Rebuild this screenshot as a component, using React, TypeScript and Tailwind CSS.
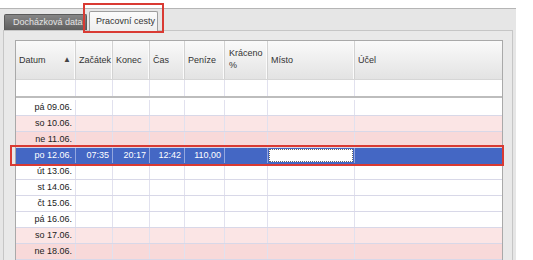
import React from 'react'

type Row = {
  date: string
  kind: 'work' | 'sat' | 'sun'
  selected?: boolean
  vals?: string[]
}

const rows: Row[] = [
  { date: 'pá 09.06.', kind: 'work' },
  { date: 'so 10.06.', kind: 'sat' },
  { date: 'ne 11.06.', kind: 'sun' },
  { date: 'po 12.06.', kind: 'work', selected: true, vals: ['07:35', '20:17', '12:42', '110,00'] },
  { date: 'út 13.06.', kind: 'work' },
  { date: 'st 14.06.', kind: 'work' },
  { date: 'čt 15.06.', kind: 'work' },
  { date: 'pá 16.06.', kind: 'work' },
  { date: 'so 17.06.', kind: 'sat' },
  { date: 'ne 18.06.', kind: 'sun' },
]

const cols = 'grid grid-cols-[60px_37px_37px_35px_40px_43px_87px_1fr]'

function HeaderCell({ children, last }: { children?: React.ReactNode; last?: boolean }) {
  return (
    <div
      className={`h-full px-[3px] pt-[13px] text-[#333] leading-[12px] whitespace-nowrap ${
        last ? '' : 'border-r border-[#d2d2d2] shadow-[inset_-1px_0_0_#fbfbfb]'
      }`}
    >
      {children}
    </div>
  )
}

function DataRow({ row }: { row: Row }) {
  const bg = row.selected
    ? 'bg-[#4467c4] text-white'
    : row.kind === 'sat'
    ? 'bg-[#fbe5e5] text-[#222]'
    : row.kind === 'sun'
    ? 'bg-[#f8d9d9] text-[#222]'
    : 'bg-white text-[#222]'
  const line = row.selected ? 'border-[#93a6de]' : 'border-[#e1e1ee]'
  const cell = `h-full border-r ${line} pr-[3px] text-right leading-[15px] whitespace-nowrap`
  const v = row.vals ?? ['', '', '', '']
  return (
    <div className={`${cols} h-[16px] border-b ${row.selected ? 'border-[#4467c4]' : 'border-[#d8d8e8]'} ${bg}`}>
      <div className={cell}>{row.date}</div>
      <div className={cell}>{v[0]}</div>
      <div className={cell}>{v[1]}</div>
      <div className={cell}>{v[2]}</div>
      <div className={cell}>{v[3]}</div>
      <div className={cell}></div>
      <div className={`h-full border-r ${line} ${row.selected ? 'p-px' : ''}`}>
        {row.selected && <div className="h-full bg-white border border-dotted border-[#666]" />}
      </div>
      <div className="h-full"></div>
    </div>
  )
}

export default function App() {
  return (
    <div className="relative w-[533px] h-[260px] overflow-hidden bg-white font-['Liberation_Sans',Arial,sans-serif] text-[9px]">
      <div className="mt-[8px] w-[516px] h-[252px] bg-[#e6e6e6] border-t border-[#b5b5b5] flex flex-col">
        {/* Tabs */}
        <div className="h-[21px] flex items-end pl-[4px] gap-[2px]">
          <div className="h-[16px] w-[83px] rounded-t-[2px] border border-b-0 border-[#5a5a5a] bg-gradient-to-b from-[#858585] to-[#5f5f5f] text-[#e4e4e4] text-[9px] leading-[15px] pl-[8px] whitespace-nowrap">
            Docházková data
          </div>
          <div className="relative z-10 -mb-px h-[20px] w-[69px] rounded-t-[2px] border border-b-0 border-[#9d9d9d] bg-gradient-to-b from-[#fbfbfb] to-[#eeeeee] text-[#333] text-[9px] leading-[19px] pl-[6px] whitespace-nowrap">
            Pracovní cesty
          </div>
        </div>

        {/* Tab content */}
        <div className="flex-1 mx-[3px] border-t border-l border-r border-[#c6c6c6] bg-[#e9e9e9] pt-[9px] pl-[11px] pr-[9px]">
          <div className="h-full border-t border-l border-r border-[#a9a9a9] bg-white">
            {/* Header */}
            <div className={`${cols} h-[39px] bg-gradient-to-b from-[#fafafa] to-[#e3e3e3] border-b border-[#d6d6d6]`}>
              <HeaderCell>
                <div className="flex justify-between items-center pr-[1px]">
                  <span>Datum</span>
                  <span className="text-[8px] leading-[8px] text-[#444]">▲</span>
                </div>
              </HeaderCell>
              <HeaderCell>Začátek</HeaderCell>
              <HeaderCell>Konec</HeaderCell>
              <HeaderCell>Čas</HeaderCell>
              <HeaderCell>Peníze</HeaderCell>
              <div className="h-full px-[4px] pt-[6px] text-[#333] leading-[12px] border-r border-[#d2d2d2] shadow-[inset_-1px_0_0_#fbfbfb]">
                Kráceno
                <br />%
              </div>
              <HeaderCell>Místo</HeaderCell>
              <HeaderCell last>Účel</HeaderCell>
            </div>

            {/* Empty new row */}
            <div className={`${cols} h-[16px] bg-white`}>
              {Array.from({ length: 7 }).map((_, i) => (
                <div key={i} className="h-full border-r border-[#e1e1ee]" />
              ))}
              <div />
            </div>
            <div className="h-[4px] border-t-2 border-[#bdbdbd] bg-white" />

            {rows.map((r) => (
              <DataRow key={r.date} row={r} />
            ))}
          </div>
        </div>
      </div>

      {/* Red annotation boxes */}
      <div className="absolute left-[83px] top-[3px] w-[81px] h-[30px] border-2 border-[#d93a33]" />
      <div className="absolute left-[10px] top-[145px] w-[494px] h-[21px] border-2 border-[#d93a33]" />
    </div>
  )
}
